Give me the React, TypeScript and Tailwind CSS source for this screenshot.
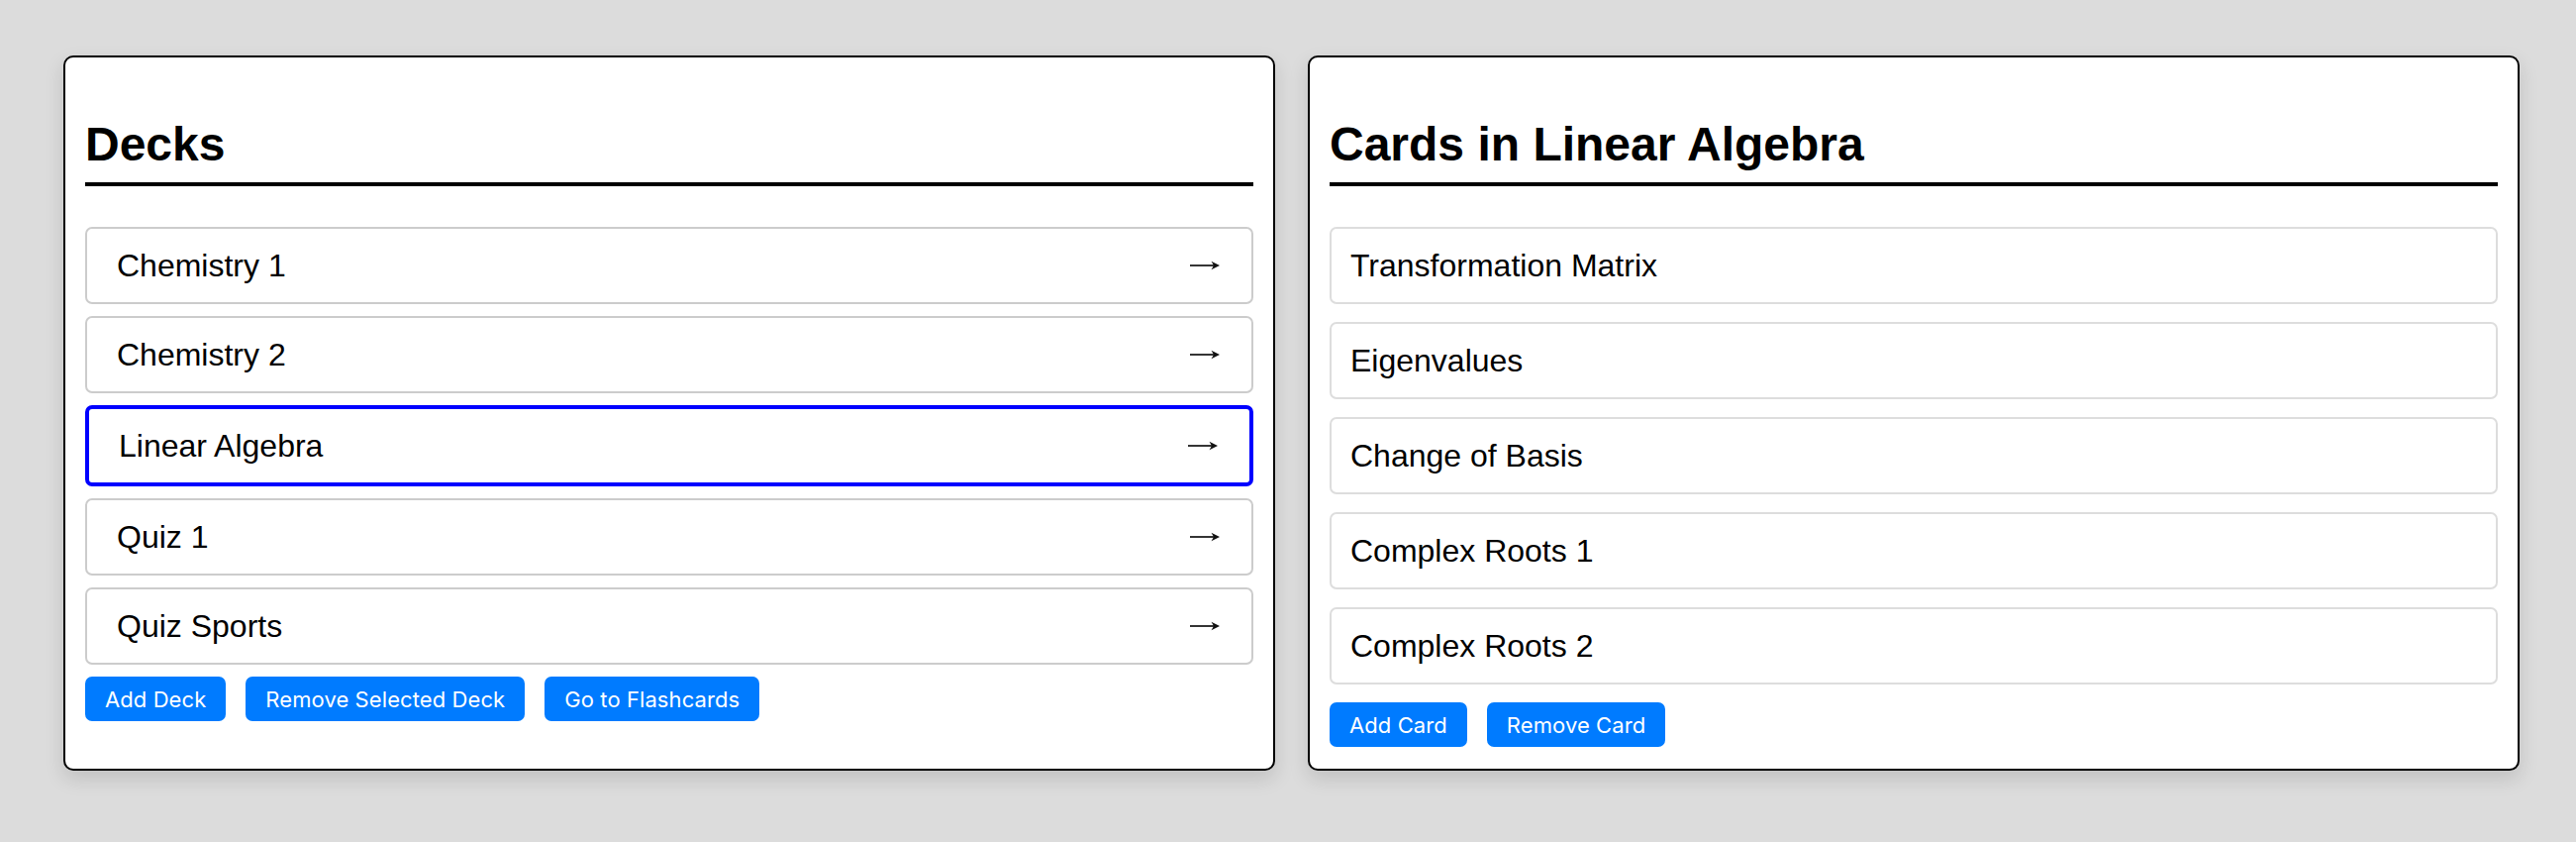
import React from "react";

const decks = ["Chemistry 1", "Chemistry 2", "Linear Algebra", "Quiz 1", "Quiz Sports"];
const cards = [
  "Transformation Matrix",
  "Eigenvalues",
  "Change of Basis",
  "Complex Roots 1",
  "Complex Roots 2",
];

function Arrow() {
  return (
    <svg width="30" height="12" viewBox="0 0 30 12" className="block shrink-0">
      <line x1="0" y1="6" x2="26" y2="6" stroke="#111" strokeWidth="1.7" />
      <path d="M30 6 L21.5 1.8 L24 6 L21.5 10.2 Z" fill="#111" />
    </svg>
  );
}

function Btn({ children }: { children: React.ReactNode }) {
  return (
    <button
      type="button"
      className="flex h-[45px] items-center rounded-[7px] bg-[#007bff] px-[20px] text-[22px] leading-none tracking-[0.004em] text-white"
      style={{ fontFamily: "Inter, 'Noto Sans', sans-serif" }}
    >
      {children}
    </button>
  );
}

function Heading({ children }: { children: React.ReactNode }) {
  return (
    <h2 className="mt-[60px] border-b-4 border-black pb-[11px] text-[48px] font-bold leading-[55px] text-black">
      {children}
    </h2>
  );
}

export default function App() {
  return (
    <div
      className="flex min-h-screen items-start gap-[33px] bg-[#dcdcdc] pl-[64px] pt-[56px]"
      style={{ fontFamily: "'Liberation Sans', Arial, sans-serif" }}
    >
      <div className="flex h-[722px] w-[1224px] flex-col rounded-[10px] border-2 border-black bg-white px-[20px] pb-[21px] shadow-[0_8px_20px_rgba(0,0,0,0.13)]">
        <Heading>Decks</Heading>
        <div className="mt-[41px] flex flex-col gap-[12px]">
          {decks.map((d) => {
            const sel = d === "Linear Algebra";
            return (
              <div
                key={d}
                className={
                  sel
                    ? "flex items-center justify-between rounded-[7px] border-4 border-[#0000ff] py-[18px] pl-[30px] pr-[32px] text-[32px] leading-[38px] text-black"
                    : "flex items-center justify-between rounded-[7px] border-2 border-[#cccccc] py-[18px] pl-[30px] pr-[32px] text-[32px] leading-[38px] text-black"
                }
              >
                <span>{d}</span>
                <Arrow />
              </div>
            );
          })}
        </div>
        <div className="mt-[12px] flex gap-[20px]">
          <Btn>Add Deck</Btn>
          <Btn>Remove Selected Deck</Btn>
          <Btn>Go to Flashcards</Btn>
        </div>
      </div>

      <div className="flex h-[722px] w-[1224px] flex-col rounded-[10px] border-2 border-black bg-white px-[20px] pb-[21px] shadow-[0_8px_20px_rgba(0,0,0,0.13)]">
        <Heading>Cards in Linear Algebra</Heading>
        <div className="mt-[41px] flex flex-col gap-[18px]">
          {cards.map((c) => (
            <div
              key={c}
              className="flex items-center rounded-[7px] border-2 border-[#dddddd] py-[18px] pl-[19px] pr-[19px] text-[32px] leading-[38px] text-black"
            >
              <span>{c}</span>
            </div>
          ))}
        </div>
        <div className="mt-[18px] flex gap-[20px]">
          <Btn>Add Card</Btn>
          <Btn>Remove Card</Btn>
        </div>
      </div>
    </div>
  );
}
